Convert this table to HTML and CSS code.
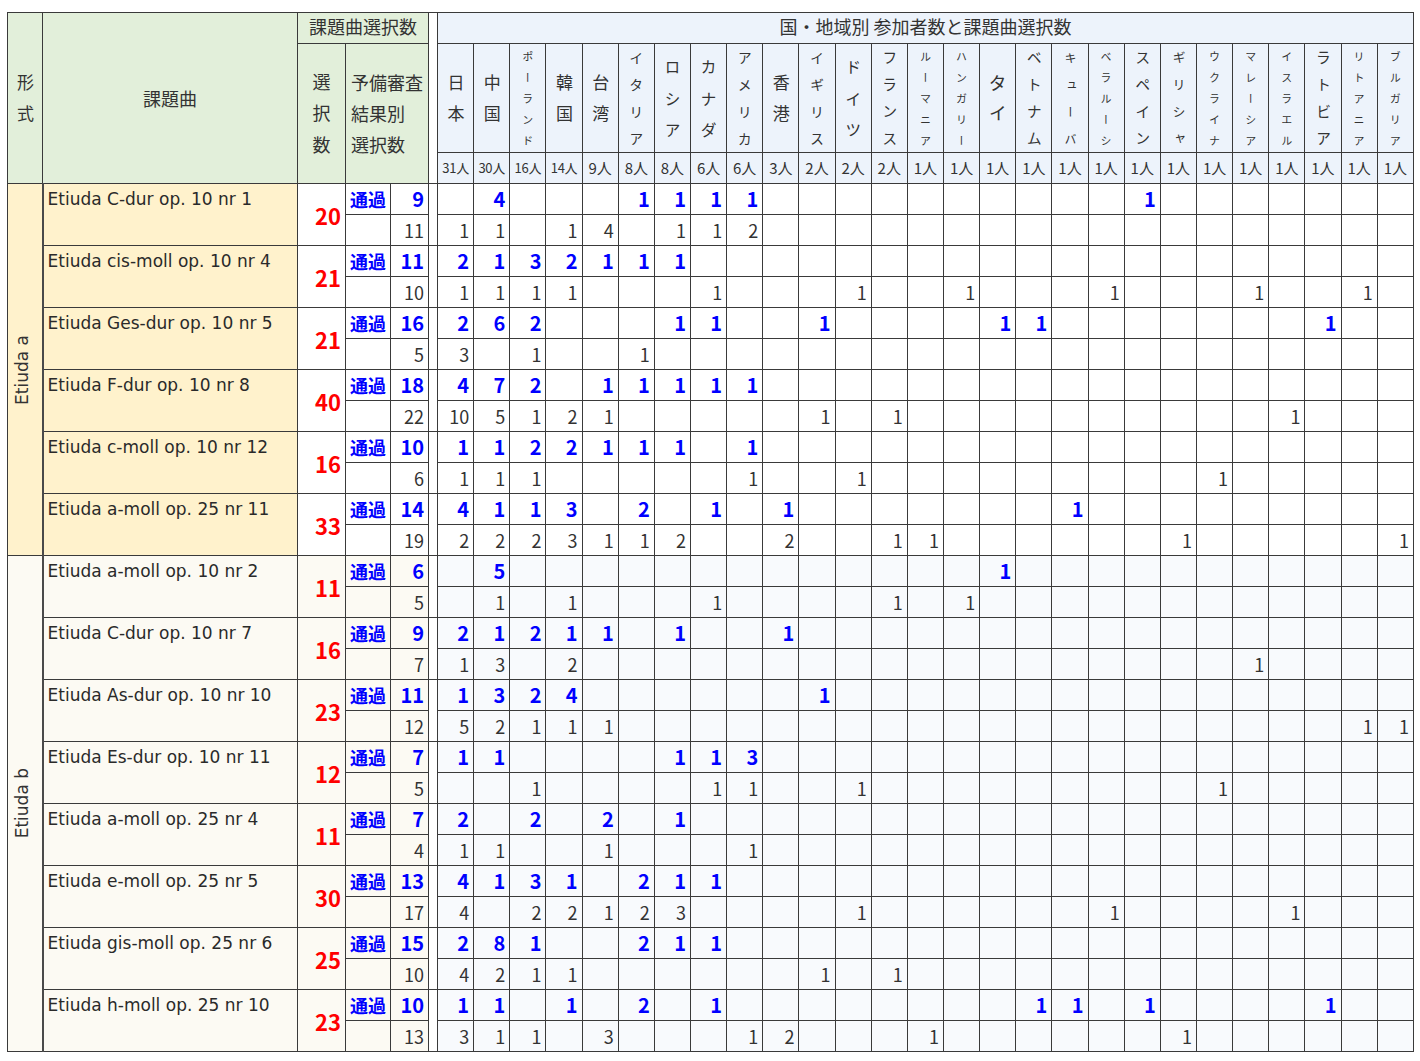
FILE: index.html
```html
<!DOCTYPE html>
<html lang="ja">
<head>
<meta charset="utf-8">
<title>国・地域別 参加者数と課題曲選択数</title>
<link rel="stylesheet" href="styles.css">
</head>
<body>
<table class="grid">
<colgroup>
<col class="c-kind"><col class="c-title"><col class="c-sum"><col class="c-lbl"><col class="c-num"><col class="c-gap">
<col><col><col><col><col><col><col><col><col><col><col><col><col><col><col><col><col><col><col><col><col><col><col><col><col><col><col>
</colgroup>
<thead>
<tr class="h1">
<th class="hg kh" rowspan="3"><span class="v v2">形式</span></th>
<th class="hg" rowspan="3">課題曲</th>
<th class="hg top" colspan="3">課題曲選択数</th>
<th class="g" rowspan="3"></th>
<th class="ttl top" colspan="27">国・地域別 参加者数と課題曲選択数</th>
</tr>
<tr class="h2">
<th class="hg" rowspan="2"><span class="v vs">選択数</span></th>
<th class="hg yb" colspan="2" rowspan="2">予備審査<br>結果別<br>選択数</th>
<th><span class="v v2">日本</span></th>
<th><span class="v v2">中国</span></th>
<th><span class="v v5">ポーランド</span></th>
<th><span class="v v2">韓国</span></th>
<th><span class="v v2">台湾</span></th>
<th><span class="v v4">イタリア</span></th>
<th><span class="v v3">ロシア</span></th>
<th><span class="v v3">カナダ</span></th>
<th><span class="v v4">アメリカ</span></th>
<th><span class="v v2">香港</span></th>
<th><span class="v v4">イギリス</span></th>
<th><span class="v v3">ドイツ</span></th>
<th><span class="v v4 v4b">フランス</span></th>
<th><span class="v v5">ルーマニア</span></th>
<th><span class="v v5">ハンガリー</span></th>
<th><span class="v v2 v2t">タイ</span></th>
<th><span class="v v4 v4b">ベトナム</span></th>
<th><span class="v v4 v4s">キューバ</span></th>
<th><span class="v v5">ベラルーシ</span></th>
<th><span class="v v4 v4b">スペイン</span></th>
<th><span class="v v4 v4m">ギリシャ</span></th>
<th><span class="v v5">ウクライナ</span></th>
<th><span class="v v5">マレーシア</span></th>
<th><span class="v v5">イスラエル</span></th>
<th><span class="v v4 v4b">ラトビア</span></th>
<th><span class="v v5">リトアニア</span></th>
<th><span class="v v5">ブルガリア</span></th>
</tr>
<tr class="h3">
<th class="cnt sm">31人</th><th class="cnt sm">30人</th><th class="cnt sm">16人</th><th class="cnt sm">14人</th><th class="cnt">9人</th><th class="cnt">8人</th><th class="cnt">8人</th><th class="cnt">6人</th><th class="cnt">6人</th><th class="cnt">3人</th><th class="cnt">2人</th><th class="cnt">2人</th><th class="cnt">2人</th><th class="cnt">1人</th><th class="cnt">1人</th><th class="cnt">1人</th><th class="cnt">1人</th><th class="cnt">1人</th><th class="cnt">1人</th><th class="cnt">1人</th><th class="cnt">1人</th><th class="cnt">1人</th><th class="cnt">1人</th><th class="cnt">1人</th><th class="cnt">1人</th><th class="cnt">1人</th><th class="cnt">1人</th>
</tr>
</thead>
<tbody class="sa">
<tr class="pr">
<td class="k" rowspan="12"><span>Etiuda a</span></td>
<td class="t" rowspan="2">Etiuda C-dur op. 10 nr 1</td><td class="s" rowspan="2">20</td><td class="l">通過</td><td class="n">9</td><td class="g" rowspan="2"></td>
<td></td><td>4</td><td></td><td></td><td></td><td>1</td><td>1</td><td>1</td><td>1</td><td></td><td></td><td></td><td></td><td></td><td></td><td></td><td></td><td></td><td></td><td>1</td><td></td><td></td><td></td><td></td><td></td><td></td><td></td>
</tr>
<tr class="qr">
<td class="l"></td><td class="n">11</td>
<td>1</td><td>1</td><td></td><td>1</td><td>4</td><td></td><td>1</td><td>1</td><td>2</td><td></td><td></td><td></td><td></td><td></td><td></td><td></td><td></td><td></td><td></td><td></td><td></td><td></td><td></td><td></td><td></td><td></td><td></td>
</tr>
<tr class="pr">
<td class="t" rowspan="2">Etiuda cis-moll op. 10 nr 4</td><td class="s" rowspan="2">21</td><td class="l">通過</td><td class="n">11</td><td class="g" rowspan="2"></td>
<td>2</td><td>1</td><td>3</td><td>2</td><td>1</td><td>1</td><td>1</td><td></td><td></td><td></td><td></td><td></td><td></td><td></td><td></td><td></td><td></td><td></td><td></td><td></td><td></td><td></td><td></td><td></td><td></td><td></td><td></td>
</tr>
<tr class="qr">
<td class="l"></td><td class="n">10</td>
<td>1</td><td>1</td><td>1</td><td>1</td><td></td><td></td><td></td><td>1</td><td></td><td></td><td></td><td>1</td><td></td><td></td><td>1</td><td></td><td></td><td></td><td>1</td><td></td><td></td><td></td><td>1</td><td></td><td></td><td>1</td><td></td>
</tr>
<tr class="pr">
<td class="t" rowspan="2">Etiuda Ges-dur op. 10 nr 5</td><td class="s" rowspan="2">21</td><td class="l">通過</td><td class="n">16</td><td class="g" rowspan="2"></td>
<td>2</td><td>6</td><td>2</td><td></td><td></td><td></td><td>1</td><td>1</td><td></td><td></td><td>1</td><td></td><td></td><td></td><td></td><td>1</td><td>1</td><td></td><td></td><td></td><td></td><td></td><td></td><td></td><td>1</td><td></td><td></td>
</tr>
<tr class="qr">
<td class="l"></td><td class="n">5</td>
<td>3</td><td></td><td>1</td><td></td><td></td><td>1</td><td></td><td></td><td></td><td></td><td></td><td></td><td></td><td></td><td></td><td></td><td></td><td></td><td></td><td></td><td></td><td></td><td></td><td></td><td></td><td></td><td></td>
</tr>
<tr class="pr">
<td class="t" rowspan="2">Etiuda F-dur op. 10 nr 8</td><td class="s" rowspan="2">40</td><td class="l">通過</td><td class="n">18</td><td class="g" rowspan="2"></td>
<td>4</td><td>7</td><td>2</td><td></td><td>1</td><td>1</td><td>1</td><td>1</td><td>1</td><td></td><td></td><td></td><td></td><td></td><td></td><td></td><td></td><td></td><td></td><td></td><td></td><td></td><td></td><td></td><td></td><td></td><td></td>
</tr>
<tr class="qr">
<td class="l"></td><td class="n">22</td>
<td>10</td><td>5</td><td>1</td><td>2</td><td>1</td><td></td><td></td><td></td><td></td><td></td><td>1</td><td></td><td>1</td><td></td><td></td><td></td><td></td><td></td><td></td><td></td><td></td><td></td><td></td><td>1</td><td></td><td></td><td></td>
</tr>
<tr class="pr">
<td class="t" rowspan="2">Etiuda c-moll op. 10 nr 12</td><td class="s" rowspan="2">16</td><td class="l">通過</td><td class="n">10</td><td class="g" rowspan="2"></td>
<td>1</td><td>1</td><td>2</td><td>2</td><td>1</td><td>1</td><td>1</td><td></td><td>1</td><td></td><td></td><td></td><td></td><td></td><td></td><td></td><td></td><td></td><td></td><td></td><td></td><td></td><td></td><td></td><td></td><td></td><td></td>
</tr>
<tr class="qr">
<td class="l"></td><td class="n">6</td>
<td>1</td><td>1</td><td>1</td><td></td><td></td><td></td><td></td><td></td><td>1</td><td></td><td></td><td>1</td><td></td><td></td><td></td><td></td><td></td><td></td><td></td><td></td><td></td><td>1</td><td></td><td></td><td></td><td></td><td></td>
</tr>
<tr class="pr">
<td class="t" rowspan="2">Etiuda a-moll op. 25 nr 11</td><td class="s" rowspan="2">33</td><td class="l">通過</td><td class="n">14</td><td class="g" rowspan="2"></td>
<td>4</td><td>1</td><td>1</td><td>3</td><td></td><td>2</td><td></td><td>1</td><td></td><td>1</td><td></td><td></td><td></td><td></td><td></td><td></td><td></td><td>1</td><td></td><td></td><td></td><td></td><td></td><td></td><td></td><td></td><td></td>
</tr>
<tr class="qr">
<td class="l"></td><td class="n">19</td>
<td>2</td><td>2</td><td>2</td><td>3</td><td>1</td><td>1</td><td>2</td><td></td><td></td><td>2</td><td></td><td></td><td>1</td><td>1</td><td></td><td></td><td></td><td></td><td></td><td></td><td>1</td><td></td><td></td><td></td><td></td><td></td><td>1</td>
</tr>
</tbody>
<tbody class="sb">
<tr class="pr">
<td class="k" rowspan="16"><span>Etiuda b</span></td>
<td class="t" rowspan="2">Etiuda a-moll op. 10 nr 2</td><td class="s" rowspan="2">11</td><td class="l">通過</td><td class="n">6</td><td class="g" rowspan="2"></td>
<td></td><td>5</td><td></td><td></td><td></td><td></td><td></td><td></td><td></td><td></td><td></td><td></td><td></td><td></td><td></td><td>1</td><td></td><td></td><td></td><td></td><td></td><td></td><td></td><td></td><td></td><td></td><td></td>
</tr>
<tr class="qr">
<td class="l"></td><td class="n">5</td>
<td></td><td>1</td><td></td><td>1</td><td></td><td></td><td></td><td>1</td><td></td><td></td><td></td><td></td><td>1</td><td></td><td>1</td><td></td><td></td><td></td><td></td><td></td><td></td><td></td><td></td><td></td><td></td><td></td><td></td>
</tr>
<tr class="pr">
<td class="t" rowspan="2">Etiuda C-dur op. 10 nr 7</td><td class="s" rowspan="2">16</td><td class="l">通過</td><td class="n">9</td><td class="g" rowspan="2"></td>
<td>2</td><td>1</td><td>2</td><td>1</td><td>1</td><td></td><td>1</td><td></td><td></td><td>1</td><td></td><td></td><td></td><td></td><td></td><td></td><td></td><td></td><td></td><td></td><td></td><td></td><td></td><td></td><td></td><td></td><td></td>
</tr>
<tr class="qr">
<td class="l"></td><td class="n">7</td>
<td>1</td><td>3</td><td></td><td>2</td><td></td><td></td><td></td><td></td><td></td><td></td><td></td><td></td><td></td><td></td><td></td><td></td><td></td><td></td><td></td><td></td><td></td><td></td><td>1</td><td></td><td></td><td></td><td></td>
</tr>
<tr class="pr">
<td class="t" rowspan="2">Etiuda As-dur op. 10 nr 10</td><td class="s" rowspan="2">23</td><td class="l">通過</td><td class="n">11</td><td class="g" rowspan="2"></td>
<td>1</td><td>3</td><td>2</td><td>4</td><td></td><td></td><td></td><td></td><td></td><td></td><td>1</td><td></td><td></td><td></td><td></td><td></td><td></td><td></td><td></td><td></td><td></td><td></td><td></td><td></td><td></td><td></td><td></td>
</tr>
<tr class="qr">
<td class="l"></td><td class="n">12</td>
<td>5</td><td>2</td><td>1</td><td>1</td><td>1</td><td></td><td></td><td></td><td></td><td></td><td></td><td></td><td></td><td></td><td></td><td></td><td></td><td></td><td></td><td></td><td></td><td></td><td></td><td></td><td></td><td>1</td><td>1</td>
</tr>
<tr class="pr">
<td class="t" rowspan="2">Etiuda Es-dur op. 10 nr 11</td><td class="s" rowspan="2">12</td><td class="l">通過</td><td class="n">7</td><td class="g" rowspan="2"></td>
<td>1</td><td>1</td><td></td><td></td><td></td><td></td><td>1</td><td>1</td><td>3</td><td></td><td></td><td></td><td></td><td></td><td></td><td></td><td></td><td></td><td></td><td></td><td></td><td></td><td></td><td></td><td></td><td></td><td></td>
</tr>
<tr class="qr">
<td class="l"></td><td class="n">5</td>
<td></td><td></td><td>1</td><td></td><td></td><td></td><td></td><td>1</td><td>1</td><td></td><td></td><td>1</td><td></td><td></td><td></td><td></td><td></td><td></td><td></td><td></td><td></td><td>1</td><td></td><td></td><td></td><td></td><td></td>
</tr>
<tr class="pr">
<td class="t" rowspan="2">Etiuda a-moll op. 25 nr 4</td><td class="s" rowspan="2">11</td><td class="l">通過</td><td class="n">7</td><td class="g" rowspan="2"></td>
<td>2</td><td></td><td>2</td><td></td><td>2</td><td></td><td>1</td><td></td><td></td><td></td><td></td><td></td><td></td><td></td><td></td><td></td><td></td><td></td><td></td><td></td><td></td><td></td><td></td><td></td><td></td><td></td><td></td>
</tr>
<tr class="qr">
<td class="l"></td><td class="n">4</td>
<td>1</td><td>1</td><td></td><td></td><td>1</td><td></td><td></td><td></td><td>1</td><td></td><td></td><td></td><td></td><td></td><td></td><td></td><td></td><td></td><td></td><td></td><td></td><td></td><td></td><td></td><td></td><td></td><td></td>
</tr>
<tr class="pr">
<td class="t" rowspan="2">Etiuda e-moll op. 25 nr 5</td><td class="s" rowspan="2">30</td><td class="l">通過</td><td class="n">13</td><td class="g" rowspan="2"></td>
<td>4</td><td>1</td><td>3</td><td>1</td><td></td><td>2</td><td>1</td><td>1</td><td></td><td></td><td></td><td></td><td></td><td></td><td></td><td></td><td></td><td></td><td></td><td></td><td></td><td></td><td></td><td></td><td></td><td></td><td></td>
</tr>
<tr class="qr">
<td class="l"></td><td class="n">17</td>
<td>4</td><td></td><td>2</td><td>2</td><td>1</td><td>2</td><td>3</td><td></td><td></td><td></td><td></td><td>1</td><td></td><td></td><td></td><td></td><td></td><td></td><td>1</td><td></td><td></td><td></td><td></td><td>1</td><td></td><td></td><td></td>
</tr>
<tr class="pr">
<td class="t" rowspan="2">Etiuda gis-moll op. 25 nr 6</td><td class="s" rowspan="2">25</td><td class="l">通過</td><td class="n">15</td><td class="g" rowspan="2"></td>
<td>2</td><td>8</td><td>1</td><td></td><td></td><td>2</td><td>1</td><td>1</td><td></td><td></td><td></td><td></td><td></td><td></td><td></td><td></td><td></td><td></td><td></td><td></td><td></td><td></td><td></td><td></td><td></td><td></td><td></td>
</tr>
<tr class="qr">
<td class="l"></td><td class="n">10</td>
<td>4</td><td>2</td><td>1</td><td>1</td><td></td><td></td><td></td><td></td><td></td><td></td><td>1</td><td></td><td>1</td><td></td><td></td><td></td><td></td><td></td><td></td><td></td><td></td><td></td><td></td><td></td><td></td><td></td><td></td>
</tr>
<tr class="pr">
<td class="t" rowspan="2">Etiuda h-moll op. 25 nr 10</td><td class="s" rowspan="2">23</td><td class="l">通過</td><td class="n">10</td><td class="g" rowspan="2"></td>
<td>1</td><td>1</td><td></td><td>1</td><td></td><td>2</td><td></td><td>1</td><td></td><td></td><td></td><td></td><td></td><td></td><td></td><td></td><td>1</td><td>1</td><td></td><td>1</td><td></td><td></td><td></td><td></td><td>1</td><td></td><td></td>
</tr>
<tr class="qr">
<td class="l"></td><td class="n">13</td>
<td>3</td><td>1</td><td>1</td><td></td><td>3</td><td></td><td></td><td></td><td>1</td><td>2</td><td></td><td></td><td></td><td>1</td><td></td><td></td><td></td><td></td><td></td><td></td><td>1</td><td></td><td></td><td></td><td></td><td></td><td></td>
</tr>
</tbody>
</table>
</body>
</html>
```

FILE: styles.css
```css
html, body {
  background: #ffffff;
}
body {
  margin: 12px 0 0 7px;
  font-family: "Noto Sans CJK JP", "Noto Sans", sans-serif;
  color: #333333;
}

.grid {
  border-collapse: collapse;
  table-layout: fixed;
  width: 1407px;
}
.c-kind { width: 35px; }
.c-title { width: 255px; }
.c-sum { width: 48px; }
.c-lbl { width: 45px; }
.c-num { width: 38px; }
.c-gap { width: 9px; }

.grid th,
.grid td {
  border: 1px solid #3a3a3a;
  padding: 0;
  white-space: nowrap;
}
.grid td { overflow: hidden; }

/* ---------- header ---------- */
.grid th {
  font-weight: 400;
  font-size: 18px;
  line-height: 24px;
  color: #333333;
  text-align: center;
  vertical-align: middle;
  background: #edf3fb;
}
.grid th.hg { background: #e2efda; }
.grid th.g,
.grid td.g { background: #ffffff; }
.grid th.top { padding-bottom: 4px; }

.h1 { height: 31px; }
.h2 { height: 109px; }
.h3 { height: 31px; }

.grid th.kh,
.h2 th { line-height: 0; }

.grid th.yb {
  text-align: left;
  padding-left: 5px;
  line-height: 31px;
}

.v {
  display: inline-block;
  vertical-align: middle;
  writing-mode: vertical-rl;
  text-orientation: upright;
  line-height: 22px;
  color: #333333;
}
.v2 { font-size: 17px; letter-spacing: 14px; margin-bottom: -14px; }
.v2t { font-size: 18px; letter-spacing: 12px; margin-bottom: -12px; }
.v3 { font-size: 16px; letter-spacing: 15.5px; margin-bottom: -15.5px; }
.vs { font-size: 18px; letter-spacing: 13.5px; margin-bottom: -13.5px; }
.v4 { font-size: 14px; letter-spacing: 13px; margin-bottom: -13px; }
.v4b { font-size: 15px; letter-spacing: 12px; margin-bottom: -12px; }
.v4m { font-size: 13px; letter-spacing: 14px; margin-bottom: -14px; }
.v4s { font-size: 12px; letter-spacing: 15px; margin-bottom: -15px; }
.v5 { font-size: 11px; letter-spacing: 10px; margin-bottom: -10px; }

.grid th.cnt { font-size: 15px; }
.grid th.cnt.sm { font-size: 13px; letter-spacing: -0.3px; }

/* ---------- body ---------- */
.pr, .qr { height: 31px; }

.grid td {
  text-align: right;
  vertical-align: middle;
  padding-right: 4px;
  font-size: 18px;
  line-height: 24px;
  color: #333333;
  background: #ffffff;
}
.pr td {
  color: #0000ff;
  font-weight: 700;
  font-size: 20px;
}

.grid td.k {
  text-align: center;
  padding: 0 5px 0 0;
  line-height: 0;
}
.k span {
  display: inline-block;
  writing-mode: vertical-rl;
  transform: rotate(180deg);
  font-family: "DejaVu Sans", sans-serif;
  font-size: 17px;
  line-height: 22px;
  font-weight: 400;
  color: #333333;
}

.grid td.t {
  text-align: left;
  vertical-align: top;
  padding: 0 0 0 4px;
  border-left: 2px solid #4a4a4a;
  font-family: "DejaVu Sans", sans-serif;
  font-size: 17px;
  line-height: 31px;
  font-weight: 400;
  color: #2a2a2a;
}
.grid td.s {
  color: #ff0000;
  font-weight: 700;
  font-size: 22px;
  padding-right: 4px;
}
.grid td.l {
  text-align: center;
  padding: 0;
  font-size: 18px;
}
.grid td.g { padding: 0; }

.sa td.k,
.sa td.t { background: #fff2cc; }

.sb td { background: #f8fafd; }
.sb td.k,
.sb td.t,
.sb td.s,
.sb td.l,
.sb td.n { background: #fcfaf3; }
.sb td.g { background: #ffffff; }
```
